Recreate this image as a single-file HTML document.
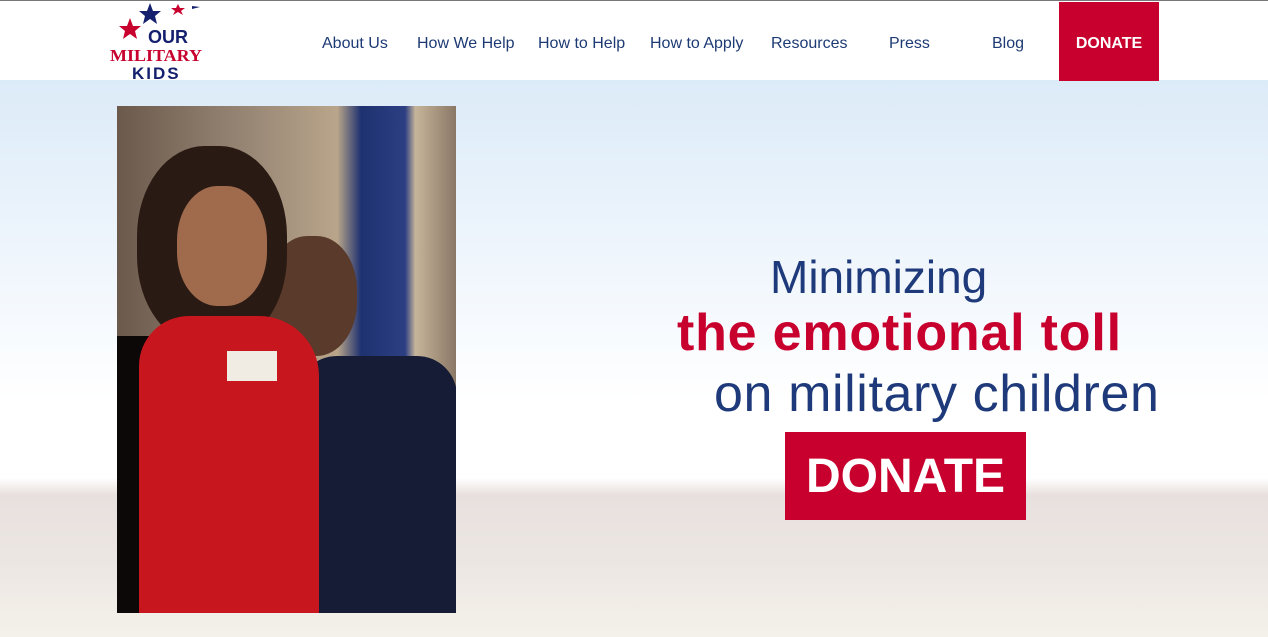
<!DOCTYPE html>
<html><head><style>
*{margin:0;padding:0;box-sizing:border-box}
body{width:1268px;height:637px;overflow:hidden;font-family:"Liberation Sans",sans-serif;position:relative;
background:linear-gradient(#dcebf8 80px,#eef5fc 250px,#fff 400px,#fff 478px,#e8e0de 495px,#ece6e2 560px,#f4f1ea 637px);}
.hdr{position:absolute;left:0;top:0;width:1268px;height:80px;background:#fff;border-top:1px solid #777}
.nav a{position:absolute;top:34px;font-size:16px;color:#1d3a74;text-decoration:none;white-space:nowrap}
.don{position:absolute;left:1059px;top:1px;width:100px;height:79px;background:#c8002e;color:#fff;font-weight:bold;font-size:16px;text-align:center;line-height:84px}
.photo{position:absolute;left:117px;top:106px;width:339px;height:507px;overflow:hidden;
background:linear-gradient(90deg,#6b5a4c 0,#9a8877 40%,#b9a58a 65%,#1e3170 72%,#2c3f82 85%,#c6b49a 88%,#8a7866 100%)}
.t{position:absolute;white-space:nowrap}
</style></head><body>
<div class="hdr">
<svg style="position:absolute;left:108px;top:0" width="96" height="80" viewBox="0 0 96 80">
<polygon points="42,2 45,10 53,10 47,15 49,23 42,18 35,23 37,15 31,10 39,10" fill="#14206e"/>
<polygon points="70,3 72,7 77,7 73,10 75,14 70,11 65,14 67,10 63,7 68,7" fill="#c8002e"/>
<polygon points="84,5 92,6 84,8" fill="#14206e"/>
<polygon points="22,17 25,25 33,25 27,30 29,38 22,33 15,38 17,30 11,25 19,25" fill="#c8002e"/>
<text x="40" y="42" font-size="18" font-weight="bold" fill="#14206e" font-family="Liberation Sans">OUR</text>
<text x="2" y="60" font-size="17" font-weight="bold" fill="#c8002e" font-family="Liberation Serif" textLength="92" lengthAdjust="spacingAndGlyphs">MILITARY</text>
<text x="24" y="78" font-size="17" font-weight="bold" fill="#14206e" font-family="Liberation Sans" letter-spacing="2">KIDS</text>
</svg>
<div class="nav">
<a style="left:322px">About Us</a><a style="left:417px">How We Help</a><a style="left:538px">How to Help</a><a style="left:650px">How to Apply</a><a style="left:771px">Resources</a><a style="left:889px">Press</a><a style="left:992px">Blog</a>
</div>
<div class="don">DONATE</div>
</div>
<div class="photo">
<div style="position:absolute;left:0;top:230px;width:60px;height:277px;background:#0c0808"></div>
<div style="position:absolute;left:150px;top:130px;width:90px;height:120px;border-radius:45%;background:#5a3a2a"></div>
<div style="position:absolute;left:180px;top:250px;width:160px;height:257px;background:#161c35;border-radius:40px 40px 0 0"></div>
<div style="position:absolute;left:20px;top:40px;width:150px;height:200px;border-radius:45%;background:#2a1a14"></div>
<div style="position:absolute;left:60px;top:80px;width:90px;height:120px;border-radius:45%;background:#a06a4c"></div>
<div style="position:absolute;left:22px;top:210px;width:180px;height:297px;background:#c8161e;border-radius:50px 60px 0 0"></div>
<div style="position:absolute;left:110px;top:245px;width:50px;height:30px;background:#f0ece4"></div>
</div>
<div class="t" style="left:770px;top:250px;font-size:46px;color:#1e3a7a;letter-spacing:0px">Minimizing</div>
<div class="t" style="left:677px;top:303px;font-size:52px;color:#c8002e;font-weight:bold;letter-spacing:0.8px">the emotional toll</div>
<div class="t" style="left:714px;top:364px;font-size:52px;color:#1e3a7a;letter-spacing:0.6px">on military children</div>
<div style="position:absolute;left:785px;top:432px;width:241px;height:88px;background:#c8002e;color:#fff;font-weight:bold;font-size:48px;text-align:center;line-height:90px">DONATE</div>
</body></html>
